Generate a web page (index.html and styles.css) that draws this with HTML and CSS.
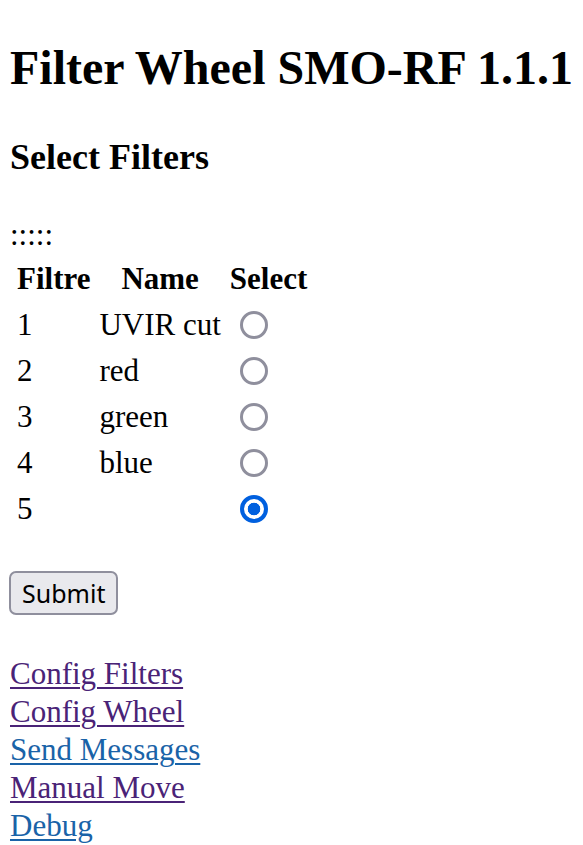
FILE: index.html
```html
<!DOCTYPE html>
<html>
<head>
<meta charset="utf-8">
<title>Filter Wheel SMO-RF 1.1.1</title>
<link rel="stylesheet" href="styles.css">
</head>
<body>
<h1 class="title">Filter Wheel SMO-RF 1.1.1</h1>
<h2 class="subtitle">Select Filters</h2>
<form class="filter-form">
<div class="dots">:::::</div>
<table class="filters">
<tr><th>Filtre</th><th>Name</th><th>Select</th></tr>
<tr><td>1</td><td>UVIR cut</td><td><input class="radio" type="radio" name="f" value="1"></td></tr>
<tr><td>2</td><td>red</td><td><input class="radio" type="radio" name="f" value="2"></td></tr>
<tr><td>3</td><td>green</td><td><input class="radio" type="radio" name="f" value="3"></td></tr>
<tr><td>4</td><td>blue</td><td><input class="radio" type="radio" name="f" value="4"></td></tr>
<tr><td>5</td><td></td><td><input class="radio" type="radio" name="f" value="5" checked></td></tr>
</table>
<button class="submit" type="button">Submit</button>
</form>
<nav class="links">
<a class="link visited" href="#">Config Filters</a>
<a class="link visited" href="#">Config Wheel</a>
<a class="link" href="#">Send Messages</a>
<a class="link visited" href="#">Manual Move</a>
<a class="link" href="#">Debug</a>
</nav>
</body>
</html>
```
FILE: styles.css
```css
html, body {
  background: #ffffff;
}
body {
  margin: 0;
  padding: 0 10px;
  font-family: "Liberation Serif", "Times New Roman", serif;
  font-size: 31px;
  line-height: 38px;
  color: #000000;
}
.title {
  font-size: 48px;
  line-height: 55px;
  font-weight: bold;
  margin: 40px 0 42px;
}
.subtitle {
  font-size: 36px;
  line-height: 41px;
  font-weight: bold;
  margin: 0 0 38px;
}
.filter-form {
  margin: 0;
}
.dots {
  height: 38px;
}
.filters {
  border-spacing: 4px;
  border-collapse: separate;
  margin-left: 0;
}
.filters th,
.filters td {
  padding: 2px 2px 2px 3px;
  line-height: 38px;
}
.filters th {
  font-weight: bold;
  text-align: center;
}
.filters td {
  text-align: left;
}
.radio {
  -webkit-appearance: none;
  appearance: none;
  display: block;
  box-sizing: border-box;
  width: 28px;
  height: 28px;
  margin: 0 0 0 10px;
  border: 3px solid #8f8f9d;
  border-radius: 50%;
  background: #ffffff;
}
.radio:checked {
  border: 4px solid #0060df;
  background: radial-gradient(circle, #0060df 0 6px, #ffffff 6.6px);
}
.submit {
  display: block;
  box-sizing: border-box;
  height: 44px;
  margin: 37px 0 0 -1px;
  padding: 0 11px;
  border: 2px solid #8f8f9d;
  border-radius: 7px;
  background: #e9e9ed;
  color: #000000;
  font-family: "Noto Sans", "Open Sans", sans-serif;
  font-size: 25px;
  line-height: 38px;
}
.links {
  display: flex;
  flex-direction: column;
  align-items: flex-start;
  margin-top: 40px;
}
.link {
  color: #1a63a8;
  text-decoration: underline;
  text-decoration-thickness: 2px;
  text-underline-offset: 3px;
  line-height: 38px;
}
.link.visited {
  color: #4a2377;
}
```
